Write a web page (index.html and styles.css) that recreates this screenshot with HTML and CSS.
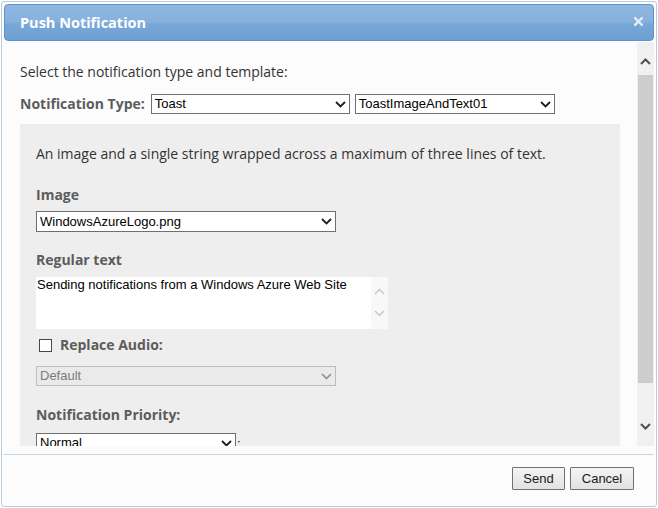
FILE: index.html
```html
<!DOCTYPE html>
<html>
<head>
<meta charset="utf-8">
<title>Push Notification</title>
<link rel="stylesheet" href="styles.css">
</head>
<body>
<div class="dialog">
  <div class="header">
    <span class="title">Push Notification</span>
    <svg class="close" width="9" height="9" viewBox="0 0 9 9"><path d="M1 1L8 8M8 1L1 8" stroke="#e2ecf7" stroke-width="2.4" stroke-linecap="square"/></svg>
  </div>
  <div class="body">
    <div class="content">
      <p class="intro">Select the notification type and template:</p>
      <div class="type-row">
        <span class="label">Notification Type:</span>
        <div class="select w199"><span class="val">Toast</span><svg class="chev" width="11" height="7" viewBox="0 0 11 7"><path d="M1 1L5.5 5.5L10 1" fill="none" stroke="#1e1e1e" stroke-width="1.8"/></svg></div>
        <div class="select w200"><span class="val">ToastImageAndText01</span><svg class="chev" width="11" height="7" viewBox="0 0 11 7"><path d="M1 1L5.5 5.5L10 1" fill="none" stroke="#1e1e1e" stroke-width="1.8"/></svg></div>
      </div>
      <div class="panel">
        <p class="desc">An image and a single string wrapped across a maximum of three lines of text.</p>
        <div class="label lbl-image">Image</div>
        <div class="select w300 tall sel-image"><span class="val">WindowsAzureLogo.png</span><svg class="chev" width="11" height="7" viewBox="0 0 11 7"><path d="M1 1L5.5 5.5L10 1" fill="none" stroke="#1e1e1e" stroke-width="1.8"/></svg></div>
        <div class="label lbl-text">Regular text</div>
        <div class="textarea">
          <div class="ta-text">Sending notifications from a Windows Azure Web Site</div>
          <div class="ta-scroll">
            <svg width="11" height="7" viewBox="0 0 11 7"><path d="M1 6L5.5 1.5L10 6" fill="none" stroke="#c4c4c4" stroke-width="1.3"/></svg>
            <svg width="11" height="7" viewBox="0 0 11 7"><path d="M1 1L5.5 5.5L10 1" fill="none" stroke="#c4c4c4" stroke-width="1.3"/></svg>
          </div>
        </div>
        <div class="check-row"><span class="checkbox"></span><span class="label">Replace Audio:</span></div>
        <div class="select w300 disabled sel-audio"><span class="val">Default</span><svg class="chev" width="11" height="7" viewBox="0 0 11 7"><path d="M1 1L5.5 5.5L10 1" fill="none" stroke="#8a8a8a" stroke-width="1.5"/></svg></div>
        <div class="label lbl-prio">Notification Priority:</div>
        <div class="prio-row"><div class="select w200"><span class="val">Normal</span><svg class="chev" width="11" height="7" viewBox="0 0 11 7"><path d="M1 1L5.5 5.5L10 1" fill="none" stroke="#1e1e1e" stroke-width="1.8"/></svg></div><span class="colon">:</span></div>
      </div>
    </div>
    <div class="scrollbar">
      <div class="sb-up"><svg width="11" height="7" viewBox="0 0 11 7"><path d="M1 6L5.5 1.5L10 6" fill="none" stroke="#4e4e4e" stroke-width="2"/></svg></div>
      <div class="sb-thumb"></div>
      <div class="sb-down"><svg width="11" height="7" viewBox="0 0 11 7"><path d="M1 1L5.5 5.5L10 1" fill="none" stroke="#4e4e4e" stroke-width="2"/></svg></div>
    </div>
  </div>
  <div class="footer">
    <button class="btn btn-send">Send</button>
    <button class="btn btn-cancel">Cancel</button>
  </div>
</div>
</body>
</html>
```

FILE: styles.css
```css
* { box-sizing: border-box; }
html, body { margin: 0; padding: 0; background: #ffffff; }
body { font-family: "Open Sans", "Liberation Sans", sans-serif; font-size: 14px; color: #333; }

.dialog {
  margin: 1px;
  width: 656px;
  height: 506px;
  border: 1px solid #bccbdc;
  border-radius: 3px;
  background: #fcfcfc;
  display: flex;
  flex-direction: column;
  overflow: hidden;
}

.header {
  margin: 2px 2px 0 2px;
  height: 37px;
  flex: none;
  border: 1px solid #5d94cd;
  border-radius: 4px;
  background: linear-gradient(#8fb7e0 0%, #87b1dd 48%, #78a8d8 54%, #6c9fd3 100%);
  display: flex;
  align-items: center;
  justify-content: space-between;
  padding: 0 10px 0 15px;
}
.title { color: #ffffff; font-weight: 700; font-size: 14.5px; line-height: 20px; margin-top: 1px; }
.close { display: block; margin-top: -3px; }

.body {
  margin: 1px 2px 0 0;
  height: 404px;
  flex: none;
  display: flex;
}
.content {
  flex: 1;
  overflow: hidden;
  padding: 20px 16px 0 18px;
}
.intro { margin: 0; line-height: 20px; color: #333; }

.type-row { display: flex; align-items: center; margin-top: 12px; }
.type-row .label { margin-right: 6px; }
.type-row .w199 { margin-right: 5px; }

.label { font-weight: 700; color: #5c5c5c; line-height: 20px; }

.select {
  height: 20px;
  border: 1px solid #6f6f6f;
  background: #ffffff;
  display: flex;
  align-items: center;
  justify-content: space-between;
  padding: 0 3px 0 3px;
  font-family: "Liberation Sans", Arial, sans-serif;
  font-size: 13px;
  color: #000;
  flex: none;
}
.select .val { line-height: 16px; }
.select .chev { display: block; }
.w199 { width: 199px; }
.w200 { width: 200px; }
.w300 { width: 300px; }
.tall { height: 21px; }
.select.disabled { background: #eaeaea; border-color: #bdbdbd; color: #7a7a7a; }

.panel {
  margin-top: 10px;
  width: 600px;
  height: 340px;
  background: #eeeeee;
  padding: 20px 16px 0 16px;
}
.desc { margin: 0; line-height: 20px; color: #333; }
.lbl-image { margin-top: 21px; }
.sel-image { margin-top: 6px; }
.lbl-text { margin-top: 18px; }

.textarea {
  margin-top: 7px;
  width: 352px;
  height: 52px;
  background: #ffffff;
  display: flex;
}
.ta-text {
  flex: 1;
  padding: 1px 2px 0 1px;
  font-family: "Liberation Sans", Arial, sans-serif;
  font-size: 13px;
  line-height: 14px;
  color: #000;
}
.ta-scroll {
  width: 17px;
  background: #f8f8f8;
  display: flex;
  flex-direction: column;
  align-items: center;
  padding-top: 11px;
  gap: 15px;
}
.ta-scroll svg { display: block; }

.check-row { display: flex; align-items: center; margin-top: 6px; }
.checkbox {
  width: 13px; height: 13px;
  margin-left: 3px; margin-right: 8px;
  border: 1px solid #474747;
  background: #ffffff;
  flex: none;
}
.sel-audio { margin-top: 11px; }

.lbl-prio { margin-top: 19px; }
.prio-row { display: flex; align-items: center; margin-top: 8px; }
.colon { font-family: "Liberation Sans", Arial, sans-serif; font-size: 13px; color: #000; margin-left: 1px; }

.scrollbar {
  width: 17px;
  flex: none;
  background: #f0f0f0;
  display: flex;
  flex-direction: column;
  align-items: center;
}
.sb-up { height: 33px; padding-top: 16px; }
.sb-up svg, .sb-down svg { display: block; }
.sb-thumb { width: 15px; height: 308px; background: #cdcdcd; }
.sb-down { padding-top: 40px; }

.footer {
  margin: 8px 2px 0 2px;
  border-top: 1px solid #c6d4e3;
  padding: 12px 20px 0 0;
  display: flex;
  justify-content: flex-end;
  gap: 5px;
}
.btn {
  height: 23px;
  border: 1px solid #707070;
  border-radius: 1px;
  background: linear-gradient(#f4f4f4, #e2e2e2);
  font-family: "Liberation Sans", Arial, sans-serif;
  font-size: 13px;
  color: #1a1a1a;
  padding: 0;
  margin: 0;
}
.btn-send { width: 53px; }
.btn-cancel { width: 64px; }
```
